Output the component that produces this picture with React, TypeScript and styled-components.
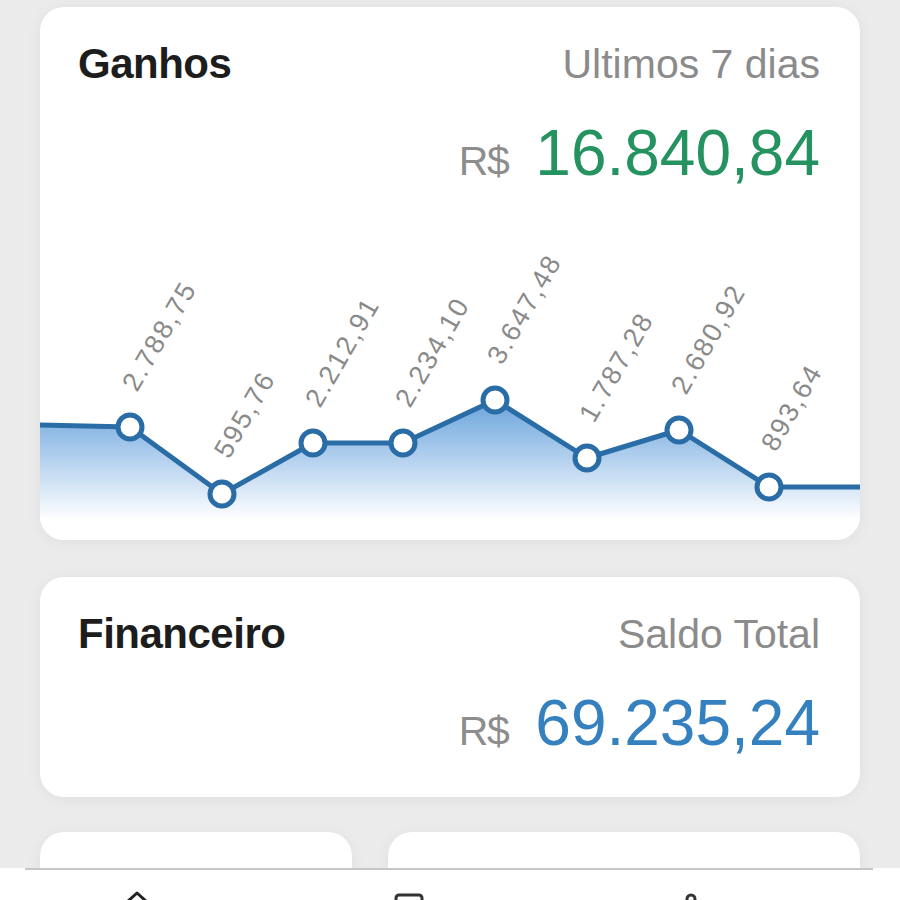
import styled, { createGlobalStyle } from "styled-components"

const GlobalStyle = createGlobalStyle`
  html, body {
    margin: 0;
    padding: 0;
    background: #ebebeb;
    font-family: "Liberation Sans", Arial, sans-serif;
  }
`

const days = [2788.75, 595.76, 2212.91, 2234.1, 3647.48, 1787.28, 2680.92, 893.64]
// y position of each point inside the chart box
const ys = [242, 309, 258, 258, 215, 273, 245, 302]
const xs = [90, 182, 273, 363, 455, 547, 639, 729]

const fmt = (v: number) =>
  v.toLocaleString("pt-BR", { minimumFractionDigits: 2, maximumFractionDigits: 2 })

const Chart = () => {
  const line = `M0,240 ` + xs.map((x, i) => `L${x},${ys[i]}`).join(" ") + ` L820,302`
  const area = line + ` L820,355 L0,355 Z`
  return (
    <ChartSvg width={820} height={355} viewBox="0 0 820 355">
      <defs>
        <linearGradient id="fillGrad" x1="0" y1="215" x2="0" y2="335" gradientUnits="userSpaceOnUse">
          <stop offset="0" stopColor="#6aa3dc" />
          <stop offset="0.55" stopColor="#bcd6f0" />
          <stop offset="1" stopColor="#ffffff" />
        </linearGradient>
      </defs>
      <path d={area} fill="url(#fillGrad)" />
      <path d={line} fill="none" stroke="#2a6da6" strokeWidth={5} strokeLinejoin="round" />
      {xs.map((x, i) => (
        <circle key={i} cx={x} cy={ys[i]} r={12} fill="#fff" stroke="#2a6da6" strokeWidth={5} />
      ))}
      {xs.map((x, i) => (
        <PointLabel key={"l" + i} x={x + 7} y={ys[i] - 34} transform={`rotate(-60 ${x + 7} ${ys[i] - 34})`}>
          {fmt(days[i])}
        </PointLabel>
      ))}
    </ChartSvg>
  )
}

const App = () => {
  return (
    <Page>
      <GlobalStyle />
      <Content>
        <Card>
          <CardHead>
            <Title>Ganhos</Title>
            <Caption>Ultimos 7 dias</Caption>
          </CardHead>
          <Amount>
            <Currency>R$</Currency>
            <Value $color="#24935f">16.840,84</Value>
          </Amount>
          <Chart />
        </Card>

        <Card $padBottom>
          <CardHead>
            <Title>Financeiro</Title>
            <Caption>Saldo Total</Caption>
          </CardHead>
          <Amount>
            <Currency>R$</Currency>
            <Value $color="#3580bf">69.235,24</Value>
          </Amount>
        </Card>

        <SmallRow>
          <SmallCard />
          <SmallCard />
        </SmallRow>
      </Content>

      <TabBar>
        <TabInner>
          <TabIcon $offset={99}>
            <svg width="26" height="26" viewBox="0 0 26 26">
              <path d="M3 12 L13 3 L23 12" fill="none" stroke="#222" strokeWidth="3" strokeLinecap="round" strokeLinejoin="round" />
            </svg>
          </TabIcon>
          <TabIcon $offset={244}>
            <svg width="30" height="26" viewBox="0 0 30 26">
              <rect x="2" y="5" width="26" height="18" rx="3" fill="none" stroke="#333" strokeWidth="3" />
            </svg>
          </TabIcon>
          <TabIcon $offset={254}>
            <svg width="26" height="26" viewBox="0 0 26 26">
              <circle cx="13" cy="9" r="4" fill="none" stroke="#333" strokeWidth="3" />
            </svg>
          </TabIcon>
        </TabInner>
      </TabBar>
    </Page>
  )
}

const Page = styled.div`
  height: 100vh;
  display: flex;
  flex-direction: column;
  overflow: hidden;
`

const Content = styled.main`
  flex: 1;
  overflow: hidden;
  padding: 7px 40px 0;
  display: flex;
  flex-direction: column;
  gap: 37px;
`

const Card = styled.section<{ $padBottom?: boolean }>`
  background: #fff;
  border-radius: 24px;
  box-shadow: 0 2px 16px rgba(0, 0, 0, 0.05);
  overflow: hidden;
  padding: 36px 0 ${(p) => (p.$padBottom ? "42px" : "0")};
  display: flex;
  flex-direction: column;
  gap: 36px;
  flex-shrink: 0;
`

const CardHead = styled.div`
  display: flex;
  justify-content: space-between;
  align-items: baseline;
  padding: 0 40px 0 38px;
`

const Title = styled.h2`
  margin: 0;
  font-size: 42px;
  line-height: 42px;
  font-weight: 700;
  color: #1d1d1d;
  letter-spacing: -0.5px;
`

const Caption = styled.span`
  font-size: 41px;
  line-height: 42px;
  color: #8b8b8b;
`

const Amount = styled.div`
  display: flex;
  justify-content: flex-end;
  align-items: baseline;
  gap: 27px;
  padding: 0 40px;
  height: 64px;
`

const Currency = styled.span`
  font-size: 41px;
  line-height: 40px;
  color: #8d8d8d;
  letter-spacing: -1.5px;
`

const Value = styled.span<{ $color: string }>`
  font-size: 64px;
  line-height: 64px;
  color: ${(p) => p.$color};
`

const ChartSvg = styled.svg`
  display: block;
  margin-top: -36px;
`

const PointLabel = styled.text`
  font-family: "Liberation Sans", Arial, sans-serif;
  font-size: 27px;
  letter-spacing: 2px;
  fill: #8a8a8a;
`

const SmallRow = styled.div`
  display: grid;
  grid-template-columns: 312px 1fr;
  gap: 36px;
  margin-top: -2px;
`

const SmallCard = styled.div`
  height: 160px;
  background: #fff;
  border-radius: 24px;
  box-shadow: 0 2px 16px rgba(0, 0, 0, 0.05);
`

const TabBar = styled.nav`
  height: 32px;
  flex-shrink: 0;
  background: #fff;
  padding: 0 27px 0 25px;
  overflow: hidden;
`

const TabInner = styled.div`
  border-top: 2px solid #c6c6c6;
  display: flex;
  align-items: flex-start;
  padding-top: 20px;
`

const TabIcon = styled.div<{ $offset: number }>`
  margin-left: ${(p) => p.$offset}px;
  line-height: 0;
`

export default App
